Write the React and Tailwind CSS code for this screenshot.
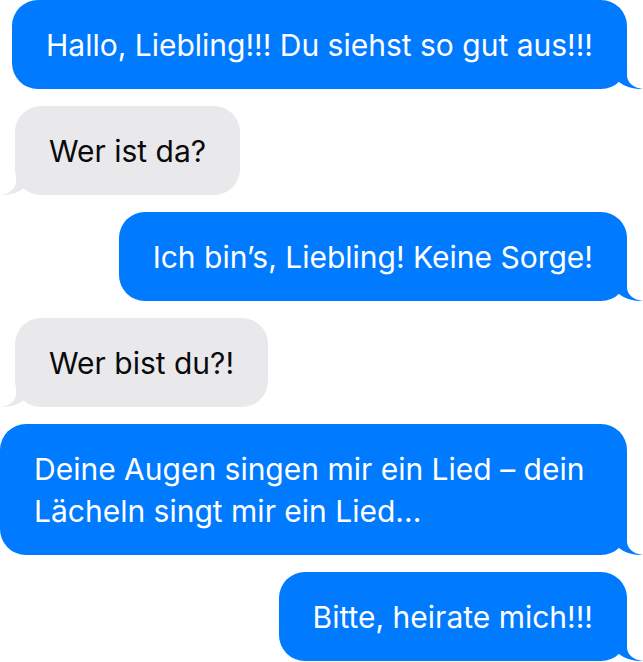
import React from 'react';

const messages = [
  { id: 1, from: 'me', text: 'Hallo, Liebling!!! Du siehst so gut aus!!!' },
  { id: 2, from: 'them', text: 'Wer ist da?' },
  { id: 3, from: 'me', text: 'Ich bin’s, Liebling! Keine Sorge!' },
  { id: 4, from: 'them', text: 'Wer bist du?!' },
  { id: 5, from: 'me', text: 'Deine Augen singen mir ein Lied – dein Lächeln singt mir ein Lied...' },
  { id: 6, from: 'me', text: 'Bitte, heirate mich!!!' },
];

// kleine "Sprechblasen"-Spitze unten am Rand
function Tail({ side, color }) {
  if (side === 'right') {
    return (
      <svg
        className="absolute bottom-0 -right-[16px] w-[28px] h-[28px]"
        viewBox="0 0 28 28"
        fill={color}
      >
        <path d="M12 0 V14 C12 21 17 26.5 28 28 C20 28.5 11 26.5 4 21 L0 0 Z" />
      </svg>
    );
  }
  return (
    <svg
      className="absolute bottom-0 -left-[15px] w-[28px] h-[28px]"
      viewBox="0 0 28 28"
      fill={color}
    >
      <path d="M16 0 V14 C16 21 11 26.5 0 28 C8 28.5 17 26.5 24 21 L28 0 Z" />
    </svg>
  );
}

function Bubble({ from, text }) {
  const mine = from === 'me';
  return (
    <div className={mine ? 'flex justify-end pr-[16px]' : 'flex justify-start pl-[15px]'}>
      <div
        className={
          mine
            ? 'relative max-w-[627px] rounded-[26px] bg-[#007aff] px-[34px] py-[23.5px] text-white'
            : 'relative max-w-[560px] rounded-[26px] bg-[#e9e9eb] px-[34px] py-[23.5px] text-[#0a0a0c]'
        }
      >
        <p className="text-[30px] leading-[42px]">{text}</p>
        <Tail side={mine ? 'right' : 'left'} color={mine ? '#007aff' : '#e9e9eb'} />
      </div>
    </div>
  );
}

export default function App() {
  return (
    <div
      className="w-[643px] h-[662px] overflow-hidden bg-white flex flex-col gap-[17px]"
      style={{ fontFamily: 'Inter, "Noto Sans", sans-serif' }}
    >
      {messages.map((m) => (
        <Bubble key={m.id} from={m.from} text={m.text} />
      ))}
    </div>
  );
}
